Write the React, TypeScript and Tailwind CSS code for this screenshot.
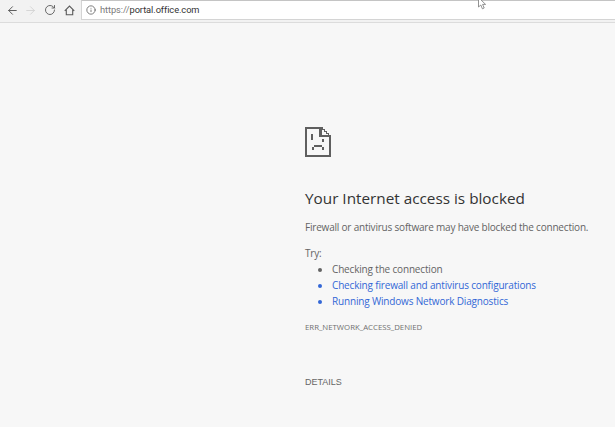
import React from 'react';
import { ArrowLeft, ArrowRight, RotateCw, Info } from 'lucide-react';

const font = "font-['Open_Sans',sans-serif]";

// Chrome's pixelated "sad page" error icon
const SadPage = () => (
  <svg width="26" height="30" viewBox="0 0 26 30" fill="#5f5f5f" shapeRendering="crispEdges">
    <path d="M0 0h16v2H2v26h22V10h2v20H0z" />
    <path d="M14 0h4v2h2v2h2v2h2v2h2v2H14z M17 3v5h6V7h-2V5h-2V3z" />
    <rect x="6" y="7" width="2" height="6" />
    <rect x="17" y="12" width="2" height="3" />
    <path d="M9 18h8v2h2v3h-2v-3H9v3H7v-3h2z" />
  </svg>
);

const HomeIcon = () => (
  <svg width="11" height="11" viewBox="0 0 12 12" fill="none" stroke="currentColor" strokeWidth="1.2" className="ml-[8px]">
    <path d="M0.8 6.4 6 1.2l5.2 5.2M2.5 5v5.6h7V5" />
  </svg>
);

const Cursor = () => (
  <svg className="absolute left-[478px] top-[-3px]" width="10" height="13" viewBox="0 0 10 13" fill="#fff" stroke="#777" strokeWidth="0.8">
    <path d="M0.5 0.5v9.5l2.3-2 1.6 3.8 1.8-.8-1.6-3.6h3z" />
  </svg>
);

export default function App() {
  return (
    <div className={`${font} relative flex h-[427px] w-[615px] flex-col overflow-hidden bg-[#f7f7f7]`}>
      <header className="flex h-[23px] shrink-0 items-start border-b border-[#dcdcdc] bg-[#f2f2f2]">
        <div className="flex h-[20px] w-[81px] shrink-0 items-center pl-[6px] text-[#5a5a5a]">
          <ArrowLeft size={13} strokeWidth={1.8} />
          <ArrowRight size={13} strokeWidth={1.5} className="ml-[5px] text-[#cfcfcf]" />
          <RotateCw size={12} strokeWidth={1.8} className="ml-[7px]" />
          <HomeIcon />
        </div>
        <div className="flex h-[20px] flex-1 items-center border-y border-l border-t-[#c4c4c4] border-b-[#d4d4d4] border-l-[#d4d4d4] bg-white pl-[4px]">
          <Info size={10} strokeWidth={1.8} className="text-[#555]" />
          <span className="ml-[4px] font-['Roboto',sans-serif] text-[9.3px] tracking-[-0.08px] leading-none text-[#7a7a7a]">
            https://<span className="text-[#333]">portal.office.com</span>
          </span>
        </div>
      </header>

      <main className="flex flex-1 flex-col pl-[305px] pt-[104px]">
        <SadPage />
        <h1 className="mt-[30px] whitespace-nowrap text-[15.3px] leading-[22px] text-[#333]">Your Internet access is blocked</h1>
        <p className="mt-[10px] whitespace-nowrap text-[10px] tracking-[-0.2px] leading-[16px] text-[#646464]">
          Firewall or antivirus software may have blocked the connection.
        </p>
        <p className="mt-[10px] text-[10px] tracking-[-0.2px] leading-[16px] text-[#646464]">Try:</p>
        <ul className="list-disc whitespace-nowrap pl-[27px] text-[10px] tracking-[-0.17px] leading-[16px] text-[#646464]">
          <li>Checking the connection</li>
          <li className="text-[#3367d6]">Checking firewall and antivirus configurations</li>
          <li className="text-[#3367d6]">Running Windows Network Diagnostics</li>
        </ul>
        <p className="mt-[12px] text-[7.8px] leading-[12px] text-[#707070]">ERR_NETWORK_ACCESS_DENIED</p>
        <button className="mt-[42px] self-start font-['Liberation_Sans',sans-serif] text-[9px] leading-[14px] text-[#666]">DETAILS</button>
      </main>
      <Cursor />
    </div>
  );
}
